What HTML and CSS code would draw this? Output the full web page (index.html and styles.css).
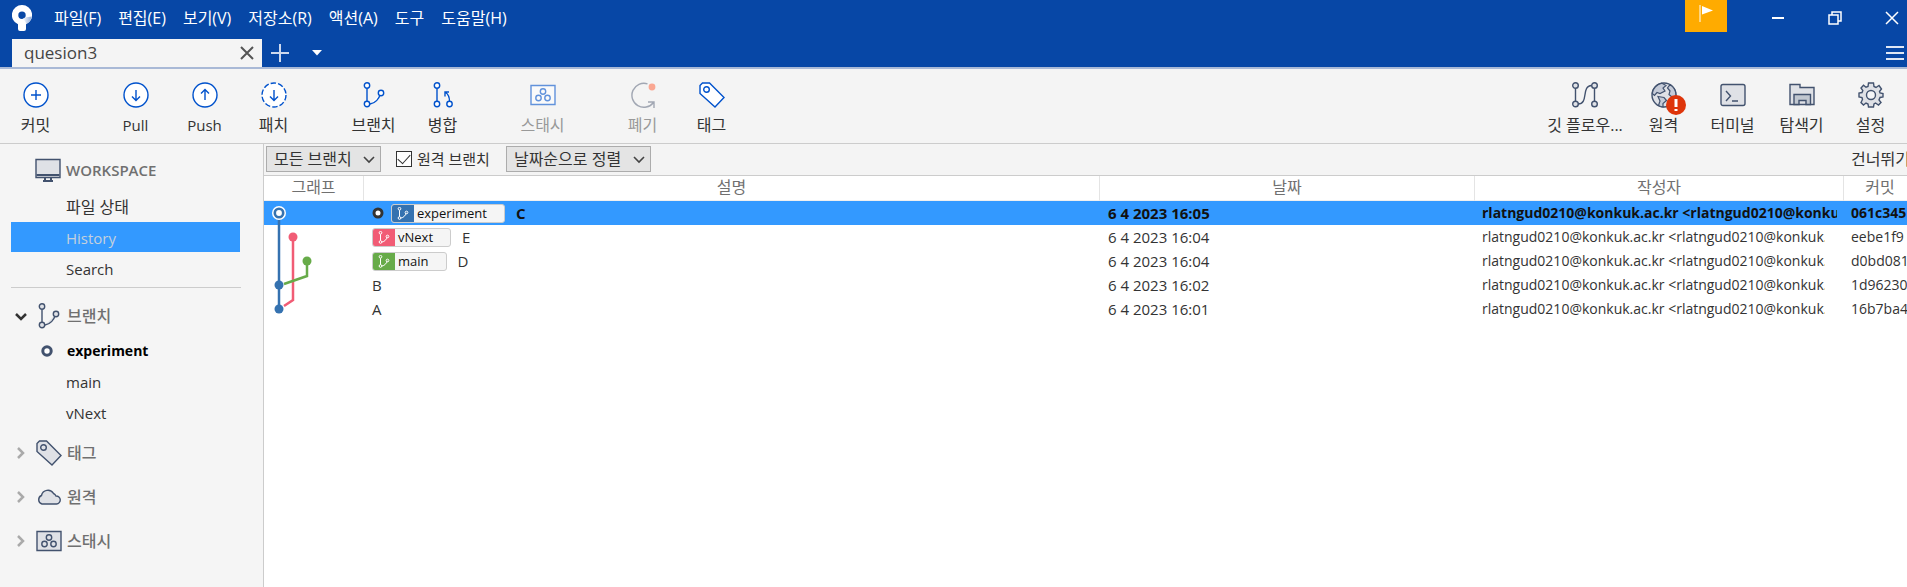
FILE: index.html
```html
<!DOCTYPE html>
<html lang="ko">
<head>
<meta charset="utf-8">
<title>Sourcetree</title>
<link rel="stylesheet" href="styles.css">
</head>
<body>
<svg class="defs" aria-hidden="true">
  <symbol id="i-branch" viewBox="0 0 26 26"><path d="M6 6.500V19.500M19.500 11.500C18 17 14 21.500 9 22"/><circle cx="6" cy="3.500" r="2.700"/><circle cx="6" cy="22" r="2.700"/><circle cx="20" cy="11" r="2.700"/></symbol>
  <symbol id="i-tag" viewBox="0 0 26 26"><path d="M1 3.500 3.500 1H10.500L25 15.500 16 25 1 11.500Z"/><circle cx="7.500" cy="7.500" r="2.800"/></symbol>
  <symbol id="i-stash" viewBox="0 0 26 26"><path d="M1 3.500H25V22.500H1Z"/><circle cx="13" cy="9.500" r="2.700"/><circle cx="8.500" cy="16" r="2.700"/><circle cx="17.500" cy="16" r="2.700"/></symbol>
  <symbol id="i-next" viewBox="0 0 12 12"><path d="M3 1 8 6 3 11"/></symbol>
  <symbol id="i-down" viewBox="0 0 12 12"><path d="M1 4 6 9 11 4"/></symbol>
</svg>

<header class="top">
  <div class="titlebar">
    <svg class="logo" viewBox="0 0 20 26"><defs><linearGradient id="lg" x1="0" y1="0" x2="1" y2="0"><stop offset="0" stop-color="#fff"/><stop offset="1" stop-color="#8fabd8"/></linearGradient></defs><path d="M10 0a10 10 0 0 0-4 19.200V24q0 2 2 2h4q2 0 2-2v-4.800A10 10 0 0 0 10 0Zm0 6.500a3.700 3.700 0 1 1 0 7.400a3.700 3.700 0 0 1 0-7.400Z" fill="#fff" fill-rule="evenodd"/><path d="M13 12.500 19.800 11.500Q19 16.500 14 19.200Q14 16 10.500 14Z" fill="url(#lg)"/></svg>
    <nav class="menu">
      <button>파일(F)</button><button>편집(E)</button><button>보기(V)</button><button>저장소(R)</button><button>액션(A)</button><button>도구</button><button>도움말(H)</button>
    </nav>
    <button class="flag" aria-label="알림"><svg width="16" height="20" viewBox="0 0 16 20"><path d="M2 1V18" stroke="#fff"/><path d="M4 2 15 6.500 4 10.500Z" fill="#fff"/></svg></button>
    <div class="winbtns">
      <button aria-label="최소화"><svg width="14" height="14"><path d="M1 7H13" stroke-width="2"/></svg></button>
      <button aria-label="복원"><svg width="14" height="14"><path d="M1 4H10V13H1ZM4 4V1H13V10H10"/></svg></button>
      <button aria-label="닫기"><svg width="14" height="14"><path d="M1 1 13 13M13 1 1 13"/></svg></button>
    </div>
  </div>
  <div class="tabs">
    <div class="tab"><span>quesion3</span><button aria-label="탭 닫기"><svg width="14" height="14"><path d="M1 1 13 13M13 1 1 13"/></svg></button></div>
    <button class="add" aria-label="새 탭"><svg width="18" height="18"><path d="M9 0V18M0 9H18"/></svg></button>
    <button class="drop" aria-label="탭 목록"><svg width="10" height="6"><path d="M0 0H10L5 5.500Z"/></svg></button>
    <button class="burger" aria-label="메뉴"><svg width="18" height="16"><path d="M0 2H18M0 8H18M0 14H18"/></svg></button>
  </div>
</header>

<div class="toolbar">
  <button class="tool first"><svg viewBox="0 0 26 26"><circle cx="13" cy="13" r="12"/><path d="M13 8V18M8 13H18"/></svg>커밋</button>
  <button class="tool sep lat"><svg viewBox="0 0 26 26"><circle cx="13" cy="13" r="12"/><path d="M13 8V18M9 14.500 13 18.500 17 14.500"/></svg>Pull</button>
  <button class="tool lat"><svg viewBox="0 0 26 26"><circle cx="13" cy="13" r="12"/><path d="M13 18V8M9 11.500 13 7.500 17 11.500"/></svg>Push</button>
  <button class="tool"><svg viewBox="0 0 26 26"><circle cx="13" cy="13" r="12" stroke-dasharray="5.500 2.040"/><path d="M13 8V18M9 14.500 13 18.500 17 14.500"/></svg>패치</button>
  <button class="tool sep"><svg><use href="#i-branch"/></svg>브랜치</button>
  <button class="tool"><svg viewBox="0 0 26 26"><path d="M7 6.500V19.500M19.500 19.500C19.500 15 18 12 15.500 10.500M15 14.500V10H19"/><circle cx="7" cy="3.500" r="2.700"/><circle cx="7" cy="22" r="2.700"/><circle cx="19.500" cy="22" r="2.700"/></svg>병합</button>
  <button class="tool sep off"><svg><use href="#i-stash"/></svg>스태시</button>
  <button class="tool sep off"><svg viewBox="0 0 26 26"><g stroke="#6b7488" fill="none"><path d="M17.500 1.800A12 12 0 1 0 23.500 20.500M18 20H24V26"/></g><circle cx="22" cy="5" r="3.400" fill="#ff7452" stroke="none"/></svg>폐기</button>
  <button class="tool"><svg><use href="#i-tag"/></svg>태그</button>
  <div class="right">
    <button class="tool gray wide"><svg viewBox="0 0 26 26"><path d="M3.500 6.500V19.500M22.500 6.500V19.500M6 22C17 22 9 4 19.500 3.500" fill="none"/><circle cx="3.500" cy="3.500" r="2.800"/><circle cx="3.500" cy="22" r="2.800"/><circle cx="22.500" cy="3.500" r="2.800"/><circle cx="22.500" cy="22" r="2.800"/></svg>깃 플로우...</button>
    <button class="tool gray"><span class="badged"><svg viewBox="0 0 26 26"><circle cx="13" cy="13" r="12"/><path fill="#c5cbd8" stroke-width="1.200" d="M11 1.200 15 3.500 12 6 14 9 9 11.500 6 10.500 3.500 13.500 1.200 11.500A12 12 0 0 1 11 1.200ZM19 2.700 16.500 6 19 9 18 12.500 21 15 24.800 14A12 12 0 0 0 19 2.700ZM7 14.500 13 15.500 15.500 18.500 12 21.500V25A12 12 0 0 1 7.500 23.500L9 19Z"/></svg><i class="alert"><svg viewBox="0 0 20 20"><circle cx="10" cy="10" r="10" fill="#de350b" stroke="none"/><path d="M10 4V12M10 14V16" stroke="#fff" stroke-width="3"/></svg></i></span>원격</button>
    <button class="tool gray"><svg viewBox="0 0 26 26"><rect x="1" y="2.500" width="24" height="21" rx="2"/><path fill="none" d="M6 9 10.500 14 6 19M12 19H18"/></svg>터미널</button>
    <button class="tool gray"><svg viewBox="0 0 26 26"><path d="M1 22.500V2.500H11V5.500H25V22.500Z"/><path fill="#c1c7d0" d="M5 22.500V12.500H21.500V22.500H17V18.500H10V22.500Z"/></svg>탐색기</button>
    <button class="tool gray"><svg viewBox="0 0 26 26"><path d="M10.500 1H15.500L16 4.500 18 5.500 21 3.500 23.500 7 21.500 9.500 22 11 25 11.500V15L22 15.500 21 18 23 20.500 20.500 23 17.500 21 16 22 15.500 25H10.500L10 22 8 21 5.500 23 3 20.500 4.500 17.500 4 15.500 1 15V11L4 10.500 4.800 8.500 3 6 5.500 3.200 8 5.200 10 4.500Z"/><circle cx="13" cy="13" r="4.500" fill="#f4f5f7"/></svg>설정</button>
  </div>
</div>

<div class="body">
  <aside class="side">
    <h2 class="sec ws"><svg class="ic" viewBox="0 0 26 26"><path d="M1 2.500H25V20.500H1Z"/><path d="M1.500 18H24.500M10 21V24M16 21V24M8 24H18" stroke-width="2"/></svg>WORKSPACE</h2>
    <ul class="views">
      <li><a href="#" class="kor">파일 상태</a></li>
      <li><a href="#" class="on">History</a></li>
      <li><a href="#">Search</a></li>
    </ul>
    <hr>
    <h2 class="sec open"><svg class="ch"><use href="#i-down"/></svg><svg class="ic"><use href="#i-branch"/></svg>브랜치</h2>
    <ul class="branches">
      <li><a href="#" class="cur"><svg class="dot" viewBox="0 0 12 12"><circle cx="6" cy="6" r="4.200"/></svg>experiment</a></li>
      <li><a href="#">main</a></li>
      <li><a href="#">vNext</a></li>
    </ul>
    <h2 class="sec"><svg class="ch"><use href="#i-next"/></svg><svg class="ic"><use href="#i-tag"/></svg>태그</h2>
    <h2 class="sec"><svg class="ch"><use href="#i-next"/></svg><svg class="ic" viewBox="0 0 26 26"><path d="M6 20A4.500 4.500 0 0 1 5.500 11.500A6.500 6.500 0 0 1 17.500 9.500A5 5 0 0 1 20 12A4 4 0 0 1 20.500 20Z"/></svg>원격</h2>
    <h2 class="sec"><svg class="ch"><use href="#i-next"/></svg><svg class="ic"><use href="#i-stash"/></svg>스태시</h2>
  </aside>

  <main class="main">
    <div class="filter">
      <span class="sel"><select class="s1" aria-label="브랜치 필터"><option>모든 브랜치</option></select><svg><use href="#i-down"/></svg></span>
      <label class="chk"><input type="checkbox" checked>원격 브랜치</label>
      <span class="sel"><select class="s2" aria-label="정렬"><option>날짜순으로 정렬</option></select><svg><use href="#i-down"/></svg></span>
      <span class="jump">건너뛰기</span>
    </div>
    <div class="log">
      <table>
        <colgroup><col class="c-graph"><col><col class="c-date"><col class="c-author"><col class="c-commit"></colgroup>
        <thead><tr><th>그래프</th><th>설명</th><th>날짜</th><th>작성자</th><th>커밋</th></tr></thead>
        <tbody>
          <tr class="selected">
            <td class="g"><svg><path class="b" d="M15 12V24"/><circle cx="15" cy="12" r="7" fill="#fff"/><circle cx="15" cy="12" r="4.200" fill="#fff" stroke="#3572b0" stroke-width="2.600"/></svg></td>
            <td><div class="desc"><svg class="head" viewBox="0 0 12 12"><circle cx="6" cy="6" r="4"/></svg><span class="ref blue"><svg><use href="#i-branch"/></svg>experiment</span>C</div></td>
            <td>6 4 2023 16:05</td><td class="sm"><div class="clip">rlatngud0210@konkuk.ac.kr &lt;rlatngud0210@konkuk.ac.kr&gt;</div></td><td class="sm">061c345</td>
          </tr>
          <tr>
            <td class="g"><svg><path class="b" d="M15 0V24"/><path class="p" d="M29 12V24"/><circle cx="29" cy="12" r="4.500" fill="#f15c75"/></svg></td>
            <td><div class="desc"><span class="ref pink"><svg><use href="#i-branch"/></svg>vNext</span>E</div></td>
            <td>6 4 2023 16:04</td><td class="sm"><div class="clip">rlatngud0210@konkuk.ac.kr &lt;rlatngud0210@konkuk.ac.kr&gt;</div></td><td class="sm">eebe1f9</td>
          </tr>
          <tr>
            <td class="g"><svg><path class="b" d="M15 0V24"/><path class="p" d="M29 0V24"/><path class="n" d="M43 12V24"/><circle cx="43" cy="12" r="4.500" fill="#67ab49"/></svg></td>
            <td><div class="desc"><span class="ref green"><svg><use href="#i-branch"/></svg>main</span>D</div></td>
            <td>6 4 2023 16:04</td><td class="sm"><div class="clip">rlatngud0210@konkuk.ac.kr &lt;rlatngud0210@konkuk.ac.kr&gt;</div></td><td class="sm">d0bd081</td>
          </tr>
          <tr>
            <td class="g"><svg><path class="b" d="M15 0V24"/><path class="p" d="M29 0V24"/><path class="n" d="M43 0V3L20 11"/><circle cx="15" cy="12" r="4.500" fill="#3572b0"/></svg></td>
            <td>B</td>
            <td>6 4 2023 16:02</td><td class="sm"><div class="clip">rlatngud0210@konkuk.ac.kr &lt;rlatngud0210@konkuk.ac.kr&gt;</div></td><td class="sm">1d96230</td>
          </tr>
          <tr>
            <td class="g"><svg><path class="b" d="M15 0V12"/><path class="p" d="M29 0V3L20 9"/><circle cx="15" cy="12" r="4.500" fill="#3572b0"/></svg></td>
            <td>A</td>
            <td>6 4 2023 16:01</td><td class="sm"><div class="clip">rlatngud0210@konkuk.ac.kr &lt;rlatngud0210@konkuk.ac.kr&gt;</div></td><td class="sm">16b7ba4</td>
          </tr>
        </tbody>
      </table>
    </div>
  </main>
</div>
</body>
</html>
```
FILE: styles.css
```css
* { box-sizing: border-box; }
html, body { height: 100%; }
body {
  margin: 0;
  display: flex;
  flex-direction: column;
  overflow: hidden;
  background: #f4f4f4;
  color: #333;
  font: 15px/24px "Open Sans", "Noto Sans CJK KR", sans-serif;
}
button { border: 0; padding: 0; background: none; color: inherit; font: inherit; }
svg { display: block; flex: none; }
.defs { position: absolute; width: 0; height: 0; }

/* Title bar and tabs */
.top { background: #0747a6; color: #fff; border-bottom: 2px solid #a9b9d6; }
.titlebar { display: flex; align-items: flex-start; height: 39px; }
.logo { width: 20px; height: 26px; margin: 5px 0 0 12px; }
.menu { display: flex; gap: 17px; margin: 6px auto 0 22px; font-size: 16px; white-space: nowrap; }
.flag { display: grid; place-items: center; width: 42px; height: 32px; padding-bottom: 4px; background: #ffab00; }
.winbtns { display: flex; gap: 43px; margin: 11px 8px 0 44px; }
.winbtns svg { fill: none; stroke: #fff; stroke-width: 1.5; }
.tabs { display: flex; align-items: center; height: 28px; padding: 0 3px 0 12px; }
.tab {
  display: flex;
  align-items: center;
  justify-content: space-between;
  width: 250px;
  height: 28px;
  padding: 0 8px 0 12px;
  background: #f4f4f4;
  color: #444;
  font-size: 17px;
}
.tab svg { stroke: #555; stroke-width: 2; }
.add { margin-left: 9px; }
.add svg { stroke: #cdd9ee; stroke-width: 2; }
.drop { margin-left: 23px; fill: #fff; }
.burger { margin-left: auto; }
.burger svg { stroke: #dfe7f5; stroke-width: 2; }

/* Toolbar */
.toolbar { display: flex; height: 75px; padding: 0 2px 0 0; border-bottom: 1px solid #ccc; }
.tool {
  display: flex;
  flex-direction: column;
  align-items: center;
  width: 69px;
  padding-top: 13px;
  gap: 5px;
  font-size: 16px;
  white-space: nowrap;
}
.tool.first { margin-left: 1px; }
.tool.sep { margin-left: 31px; }
.tool.lat { font-size: 15px; }
.tool.wide { width: 88px; }
.tool svg { width: 26px; height: 26px; fill: #fff; stroke: #0052cc; stroke-width: 1.4; }
.tool.gray svg, .ic { fill: #dfe1e6; stroke: #42526e; stroke-width: 1.4; }
.tool.off { color: #999; }
.tool.off svg { opacity: .6; }
.right { display: flex; margin-left: auto; }
.badged { position: relative; }
.tool .alert { position: absolute; left: 15px; top: 13px; }
.tool .alert svg { width: 20px; height: 20px; }

/* Sidebar */
.body { display: flex; flex: 1; min-height: 0; }
.side { width: 264px; padding: 4px 0 0; border-right: 1px solid #ccc; background: #f5f5f5; }
.sec {
  display: flex;
  align-items: center;
  height: 44px;
  margin: 0;
  padding-left: 15px;
  color: #707070;
  font-size: 16px;
  font-weight: 500;
}
.sec.ws { height: 43px; padding-left: 35px; font-size: 15px; font-weight: 600; }
.sec.open { height: 40px; }
.ic { width: 26px; height: 26px; margin-right: 5px; }
.ch { width: 12px; height: 12px; margin-right: 9px; fill: none; stroke: #aaa; stroke-width: 2.5; }
.open .ch { stroke: #333; }
.side ul { margin: 0; padding: 0 23px 0 11px; list-style: none; }
.side a {
  display: flex;
  align-items: center;
  height: 30px;
  margin-bottom: 1px;
  padding-left: 55px;
  color: #333;
  text-decoration: none;
}
.side .views a { padding-top: 2px; }
.side .branches { margin-bottom: 3px; }
.side .kor { font-size: 16px; }
.side .on { background: #39f; color: #c5d0dc; }
.side .cur { padding-left: 30px; color: #000; font-size: 14px; font-weight: 700; }
.dot { width: 12px; height: 12px; margin-right: 14px; fill: #fff; stroke: #42526e; stroke-width: 3; }
.side hr { margin: 4px 22px 8px 11px; border: 0; border-top: 1px solid #ccc; }

/* Filter bar */
.main { display: flex; flex-direction: column; flex: 1; min-width: 0; background: #fff; }
.filter { display: flex; align-items: center; height: 32px; padding: 0 0 1px 2px; background: #f4f4f4; border-bottom: 1px solid #ccc; }
.sel { position: relative; }
.sel select {
  appearance: none;
  display: block;
  height: 26px;
  padding: 0 0 0 7px;
  border: 1px solid #acacac;
  border-radius: 0;
  background: #e4e4e4;
  color: #333;
  font: inherit;
  font-size: 16px;
}
.s1 { width: 115px; }
.s2 { width: 145px; }
.sel svg { position: absolute; right: 6px; top: 7px; width: 12px; height: 12px; fill: none; stroke: #444; stroke-width: 1.6; pointer-events: none; }
.chk { display: flex; align-items: center; gap: 5px; margin: 0 16px 0 15px; }
.chk input {
  appearance: none;
  display: grid;
  place-items: center;
  width: 16px;
  height: 16px;
  margin: 0;
  border: 1px solid #333;
  background: #fff;
}
.chk input:checked::before { content: ""; width: 11px; height: 6px; margin-bottom: 3px; border: solid #333; border-width: 0 0 1px 1px; transform: rotate(-48deg); }
.jump { width: 56px; margin-left: auto; overflow: hidden; white-space: nowrap; font-size: 16px; }

/* Commit log */
.log { flex: 1; overflow: hidden; }
table { width: calc(100% + 10px); table-layout: fixed; border-collapse: separate; border-spacing: 0; }
.c-graph { width: 100px; }
.c-date { width: 375px; }
.c-author { width: 369px; }
.c-commit { width: 73px; }
th { height: 25px; padding: 0 0 2px; border-right: 1px solid #e4e4e4; border-bottom: 1px solid #f0f0f0; color: #707070; font-size: 16px; line-height: 20px; font-weight: 400; }
td { height: 24px; padding: 0 7px 0 8px; line-height: 24px; white-space: nowrap; }
.sm { padding-left: 7px; font-size: 14px; }
.g { padding: 0; }
.g svg { width: 99px; height: 24px; }
.b, .p, .n { fill: none; stroke-width: 2.5; }
.b { stroke: #3572b0; }
.p { stroke: #f15c75; }
.n { stroke: #67ab49; }
.clip { margin-right: 12px; overflow: hidden; }
.selected { background: #39f; color: #111; font-weight: 700; }
.selected .clip { margin-right: 0; }
.desc { display: flex; align-items: center; height: 24px; }
.head { width: 12px; height: 12px; margin-right: 7px; fill: #fff; stroke: #333; stroke-width: 3; }
.ref {
  display: flex;
  align-items: center;
  gap: 3px;
  height: 19px;
  margin-right: 11px;
  padding-right: 17px;
  border: 1px solid #ccc;
  border-radius: 3px;
  background: #f5f5f5;
  color: #111;
  font-size: 13px;
  font-weight: 400;
  line-height: 17px;
}
.ref svg { width: 22px; height: 17px; padding: 2px 4px; fill: none; stroke: #fff; stroke-width: 2; border-radius: 2px 0 0 2px; }
.blue svg { background: #3572b0; }
.pink svg { background: #f15c75; }
.green svg { background: #67ab49; }
```
